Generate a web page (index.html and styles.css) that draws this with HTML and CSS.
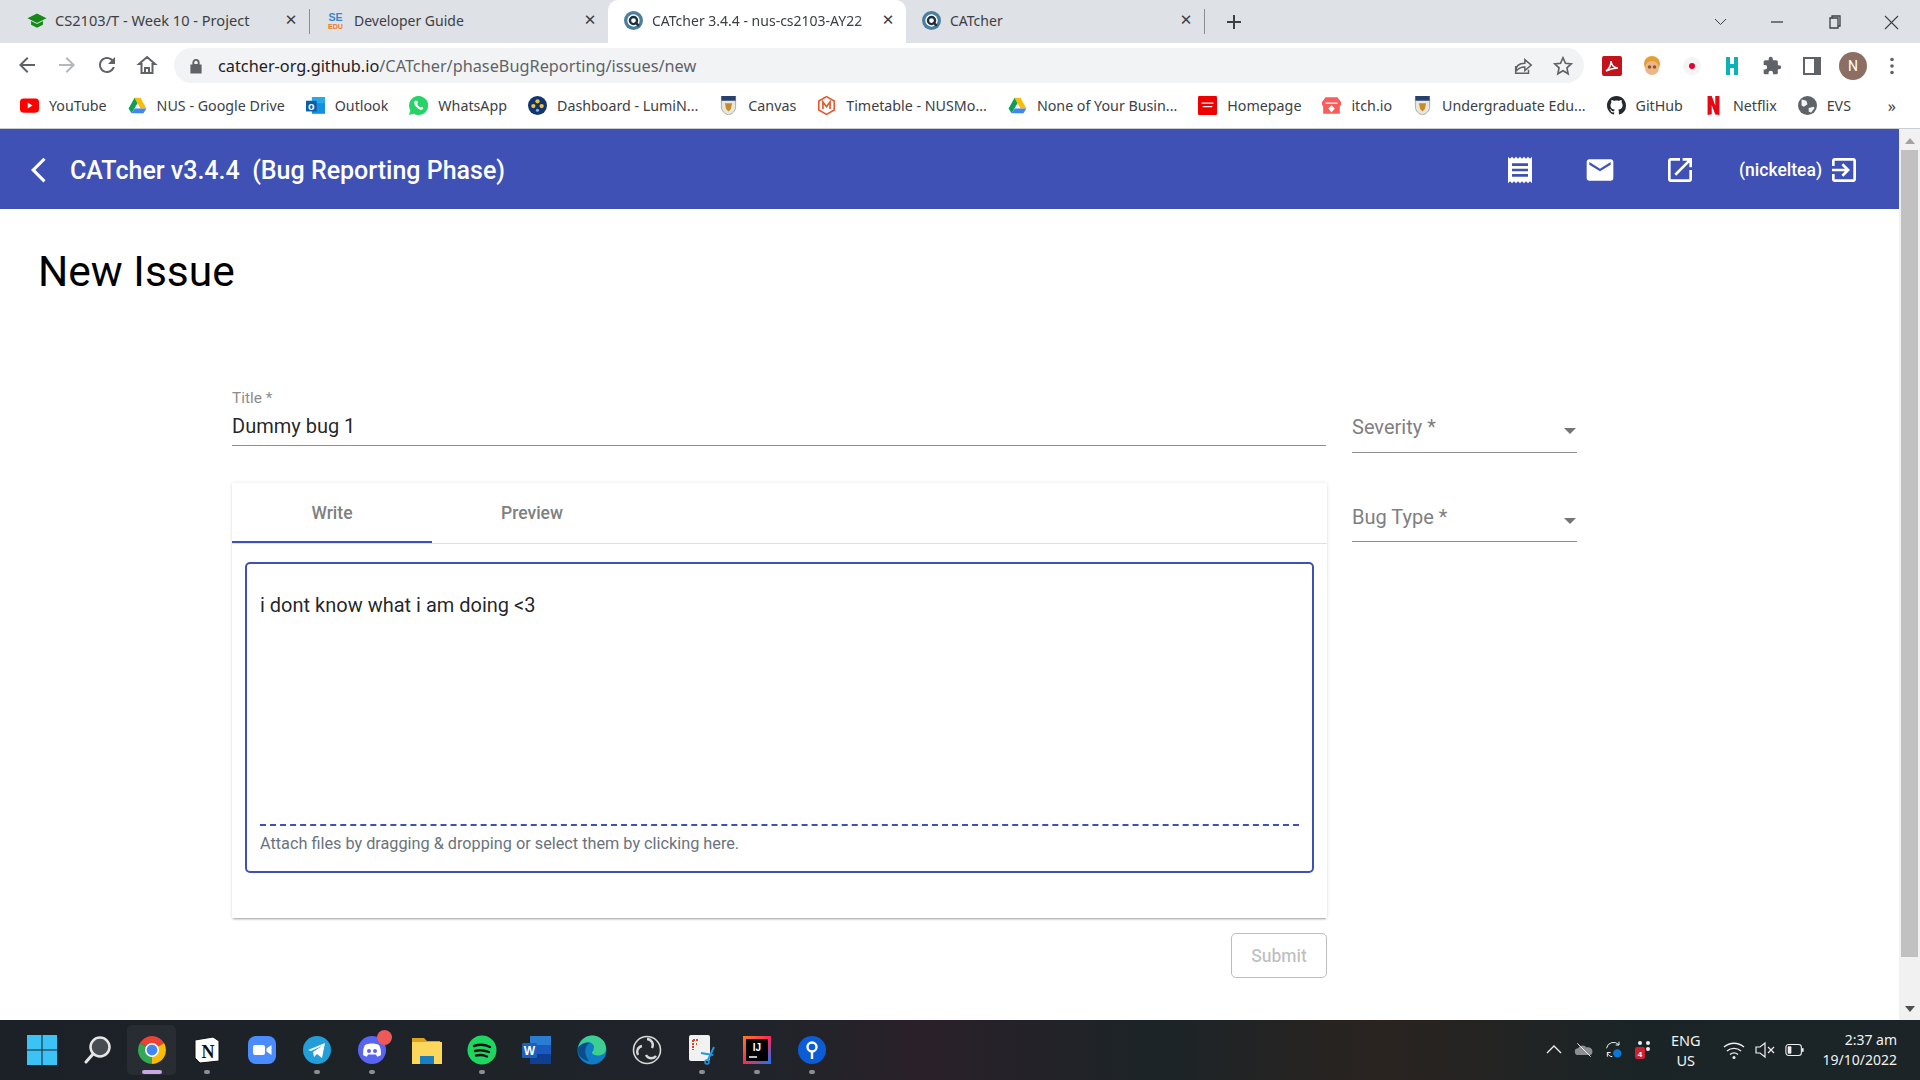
FILE: index.html
```html
<!DOCTYPE html>
<html lang="en">
<head>
  <meta charset="UTF-8">
  <title>CATcher</title>
  <link rel="stylesheet" href="styles.css">
</head>
<body>
  <svg class="defs" width="0" height="0">
    <symbol id="catcher" viewBox="0 0 16 16"><circle cx="8" cy="8" r="8" fill="#4b7f9f"/><circle cx="8" cy="8" r="5.2" fill="#fff"/><circle cx="8" cy="8" r="3" fill="none" stroke="#1e2f3d" stroke-width="2"/><path d="M9.5 9.5l3 3" stroke="#1e2f3d" stroke-width="2"/></symbol>
    <symbol id="crest" viewBox="0 0 16 16"><path d="M2 0h12v9c0 4-3 6-6 7-3-1-6-3-6-7z" fill="#e9e6da" stroke="#8a8f9a" stroke-width=".6"/><path d="M2 0h12v4H2z" fill="#28406e"/><path d="M5 6h6l-1 5-2 2-2-2z" fill="#c98a2b"/></symbol>
    <symbol id="drive" viewBox="0 0 16 16"><path d="M5.5 1.5h5l5 9h-5z" fill="#fbbc04"/><path d="M5.5 1.5L.5 10.5l2.5 4 5-8.5z" fill="#0f9d58"/><path d="M3 14.5h10l2.5-4h-10z" fill="#4285f4"/></symbol>
  </svg>

  <!-- Browser tabs -->
  <div class="tabstrip">
    <div class="tab tab-first">
      <svg class="favicon" viewBox="0 0 16 16"><path d="M8 2L0 6l8 4 8-4z" fill="#168a16"/><path d="M3 8.5v3l5 2.5 5-2.5v-3l-5 2.5z" fill="#168a16"/></svg>
      <span class="tab-title">CS2103/T - Week 10 - Project</span>
      <span class="tab-close">&#10005;</span>
    </div>
    <div class="tab-sep"></div>
    <div class="tab">
      <svg class="favicon" viewBox="0 0 16 16"><text x="8" y="8" class="fav-se">SE</text><text x="8" y="15" class="fav-edu">EDU</text></svg>
      <span class="tab-title">Developer Guide</span>
      <span class="tab-close">&#10005;</span>
    </div>
    <div class="tab tab-active">
      <svg class="favicon"><use href="#catcher"/></svg>
      <span class="tab-title tab-fade">CATcher 3.4.4 - nus-cs2103-AY22</span>
      <span class="tab-close">&#10005;</span>
    </div>
    <div class="tab">
      <svg class="favicon"><use href="#catcher"/></svg>
      <span class="tab-title">CATcher</span>
      <span class="tab-close">&#10005;</span>
    </div>
    <div class="tab-sep"></div>
    <svg class="new-tab" viewBox="0 0 16 16"><path d="M8 1v14M1 8h14" stroke="#3c4043" stroke-width="2"/></svg>
    <div class="win-controls">
      <svg class="win-btn" viewBox="0 0 57 16"><path d="M23 5l5.5 5.5L34 5" fill="none" stroke="#3c4043"/></svg>
      <svg class="win-btn" viewBox="0 0 57 16"><path d="M22 8h12" stroke="#3c4043" stroke-width="1.3"/></svg>
      <svg class="win-btn" viewBox="0 0 57 16"><path d="M24 4h8v10h-8zM26 4V2h8v10h-2" fill="none" stroke="#3c4043" stroke-width="1.3"/></svg>
      <svg class="win-btn" viewBox="0 0 57 16"><path d="M22 2l13 13M35 2L22 15" stroke="#3c4043" stroke-width="1.1"/></svg>
    </div>
  </div>

  <!-- Address bar -->
  <div class="toolbar">
    <svg class="nav-icon" viewBox="0 0 24 24"><path d="M20 11H7.83l5.59-5.59L12 4l-8 8 8 8 1.41-1.41L7.83 13H20z" fill="#5f6368"/></svg>
    <svg class="nav-icon" viewBox="0 0 24 24"><path d="M4 11h12.17l-5.59-5.59L12 4l8 8-8 8-1.41-1.41L16.17 13H4z" fill="#b4b7bb"/></svg>
    <svg class="nav-icon" viewBox="0 0 24 24"><path d="M17.65 6.35C16.2 4.9 14.21 4 12 4c-4.42 0-7.99 3.58-7.99 8s3.57 8 7.99 8c3.73 0 6.84-2.55 7.73-6h-2.08c-.82 2.33-3.04 4-5.65 4-3.31 0-6-2.69-6-6s2.69-6 6-6c1.66 0 3.14.69 4.22 1.78L13 11h7V4z" fill="#5f6368"/></svg>
    <svg class="nav-icon" viewBox="0 0 24 24"><path d="M12 4l8 7h-2.5v9h-11v-9H4zM10 20v-5h4v5" fill="none" stroke="#5f6368" stroke-width="2"/></svg>
    <div class="omnibox">
      <svg class="lock" viewBox="0 0 16 16"><path d="M3 7h10v8H3zM5 7V4.5a3 3 0 016 0V7" fill="#5f6368" stroke="#5f6368" stroke-width="1.2" fill-rule="evenodd"/><path d="M6.3 6V4.5a1.7 1.7 0 013.4 0V6z" fill="#f1f3f4"/></svg>
      <span class="url"><b>catcher-org.github.io</b>/CATcher/phaseBugReporting/issues/new</span>
      <svg class="omni-icon" viewBox="0 0 24 24"><path d="M4 12v8h14v-4M4 18c0-6 4-9 10-9V5l7 6-7 6v-4c-4 0-7 1-10 5z" fill="none" stroke="#5f6368" stroke-width="1.6"/></svg>
      <svg class="omni-icon" viewBox="0 0 24 24"><path d="M12 3l2.7 6 6.3.7-4.7 4.3 1.3 6.5L12 17.2l-5.6 3.3L7.7 14 3 9.7 9.3 9z" fill="none" stroke="#5f6368" stroke-width="1.8"/></svg>
    </div>
    <div class="ext-icons">
      <svg class="ext" viewBox="0 0 20 20"><rect width="20" height="20" rx="2" fill="#c5131c"/><path d="M4 15c3-2 5-6 5-10 0 4 3 7 7 7-4 0-8 1-12 3z" fill="none" stroke="#fff" stroke-width="1.6"/></svg>
      <svg class="ext" viewBox="0 0 20 20"><circle cx="10" cy="8" r="8" fill="#e2a032"/><circle cx="10" cy="12" r="7" fill="#efb58a"/><circle cx="7.5" cy="11" r="1.8" fill="#8a5a33"/><circle cx="12.5" cy="11" r="1.8" fill="#8a5a33"/></svg>
      <svg class="ext" viewBox="0 0 20 20"><circle cx="10" cy="10" r="9" fill="#f4f4f4"/><circle cx="10" cy="10" r="3" fill="#e4002b"/></svg>
      <svg class="ext" viewBox="0 0 20 20"><path d="M4 1h4v18H4zM12 1h4v18h-4zM8 8h4v4H8z" fill="#0ab3b8"/></svg>
      <svg class="ext" viewBox="0 0 24 24"><path d="M20.5 11H19V7c0-1.1-.9-2-2-2h-4V3.5a2.5 2.5 0 00-5 0V5H4c-1.1 0-2 .9-2 2v3.8h1.5a2.7 2.7 0 010 5.4H2V20c0 1.1.9 2 2 2h3.8v-1.5a2.7 2.7 0 015.4 0V22H17c1.1 0 2-.9 2-2v-4h1.5a2.5 2.5 0 000-5z" fill="#5f6368"/></svg>
      <svg class="ext" viewBox="0 0 20 20"><path d="M2 2h16v16H2z" fill="none" stroke="#5f6368" stroke-width="2"/><path d="M12 2h6v16h-6z" fill="#5f6368"/></svg>
      <span class="avatar">N</span>
      <svg class="ext" viewBox="0 0 20 20"><circle cx="10" cy="3.5" r="1.8" fill="#5f6368"/><circle cx="10" cy="10" r="1.8" fill="#5f6368"/><circle cx="10" cy="16.5" r="1.8" fill="#5f6368"/></svg>
    </div>
  </div>

  <!-- Bookmarks -->
  <div class="bookmarks">
    <div class="bm"><svg class="bm-icon" viewBox="0 0 16 16"><rect y="2" width="16" height="12" rx="3" fill="#f00"/><path d="M6.5 5.5v5l4-2.5z" fill="#fff"/></svg>YouTube</div>
    <div class="bm"><svg class="bm-icon"><use href="#drive"/></svg>NUS - Google Drive</div>
    <div class="bm"><svg class="bm-icon" viewBox="0 0 16 16"><rect x="5" y="1" width="11" height="14" fill="#1490df"/><rect x="5" y="1" width="11" height="5" fill="#28a8ea"/><rect y="4" width="9" height="9" fill="#0a5ea8"/><text x="4.5" y="11.5" class="fav-o">o</text></svg>Outlook</div>
    <div class="bm"><svg class="bm-icon" viewBox="0 0 16 16"><path d="M8 0a8 8 0 00-6.9 12L0 16l4.1-1.100A8 8 0 108 0z" fill="#25d366"/><path d="M5 4c-1 1-1 3 1.5 5.500S10.5 12 12 11l-.5-2-2 .5c-1-.5-2-1.500-2.500-2.500l.5-2-1-1z" fill="#fff"/></svg>WhatsApp</div>
    <div class="bm"><svg class="bm-icon" viewBox="0 0 16 16"><circle cx="8" cy="8" r="8" fill="#12356f"/><circle cx="8" cy="4.5" r="1.8" fill="#f0c33c"/><circle cx="4.5" cy="8.5" r="1.8" fill="#f0c33c"/><circle cx="11.5" cy="8.5" r="1.8" fill="#f0c33c"/><circle cx="8" cy="12" r="1.3" fill="#8fb4e8"/></svg>Dashboard - LumiN...</div>
    <div class="bm"><svg class="bm-icon"><use href="#crest"/></svg>Canvas</div>
    <div class="bm"><svg class="bm-icon" viewBox="0 0 16 16"><path d="M8 .5l6.5 3.7v7.6L8 15.5l-6.5-3.7V4.2z" fill="#fff" stroke="#e4572e" stroke-width="1.3"/><path d="M5 11V5l3 4 3-4v6" fill="none" stroke="#e4572e" stroke-width="1.4"/></svg>Timetable - NUSMo...</div>
    <div class="bm"><svg class="bm-icon"><use href="#drive"/></svg>None of Your Busin...</div>
    <div class="bm"><svg class="bm-icon" viewBox="0 0 16 16"><rect width="16" height="16" rx="1" fill="#e00"/><path d="M3 6h10M4 9h8" stroke="#fff" stroke-width="1"/></svg>Homepage</div>
    <div class="bm"><svg class="bm-icon" viewBox="0 0 16 16"><path d="M3 1h10l3 4v2a2 2 0 01-1 1.7V15H1V8.700A2 2 0 010 7V5z" fill="#fa5c5c"/><path d="M8 8.5l2 2-2 2.5-2-2.500z M3 6h10" fill="#fff" stroke="#fff"/></svg>itch.io</div>
    <div class="bm"><svg class="bm-icon"><use href="#crest"/></svg>Undergraduate Edu...</div>
    <div class="bm"><svg class="bm-icon" viewBox="0 0 16 16"><path d="M8 0C3.58 0 0 3.58 0 8c0 3.54 2.29 6.53 5.47 7.59.4.07.55-.17.55-.38 0-.19-.01-.82-.01-1.49-2.01.37-2.53-.49-2.69-.94-.09-.23-.48-.94-.82-1.13-.28-.15-.68-.52-.01-.53.63-.01 1.08.58 1.23.82.72 1.21 1.87.87 2.33.66.07-.52.28-.87.51-1.07-1.78-.2-3.64-.89-3.64-3.95 0-.87.31-1.59.82-2.15-.08-.2-.36-1.02.08-2.12 0 0 .67-.21 2.2.82.64-.18 1.32-.27 2-.27s1.36.09 2 .27c1.53-1.04 2.2-.82 2.2-.82.44 1.1.16 1.92.08 2.12.51.56.82 1.27.82 2.15 0 3.07-1.87 3.75-3.65 3.95.29.25.54.73.54 1.48 0 1.07-.01 1.93-.01 2.2 0 .21.15.46.55.38A8.01 8.01 0 0016 8c0-4.42-3.58-8-8-8z" fill="#24292e"/></svg>GitHub</div>
    <div class="bm"><svg class="bm-icon" viewBox="0 0 16 16"><path d="M3 0h3.5l3 8V0H13v16c-1.2-.2-2.3-.3-3.5-.4l-3-8V15.3L3 16z" fill="#e50914"/></svg>Netflix</div>
    <div class="bm"><svg class="bm-icon" viewBox="0 0 16 16"><circle cx="8" cy="8" r="8" fill="#5f6368"/><path d="M3 3l4 1 1 3-3 2-2-1zM9 10l4-1 1 1-3 4-2-1z" fill="#f1f3f4"/></svg>EVS</div>
    <span class="bm-more">&raquo;</span>
  </div>

  <div class="viewport">
    <div class="page">
      <!-- App header -->
      <header class="app-bar">
        <svg class="back" viewBox="0 0 12 24"><path d="M11.67 3.87L9.9 2.1 0 12l9.9 9.9 1.77-1.77L3.54 12z" fill="#fff"/></svg>
        <span class="app-title">CATcher v3.4.4  (Bug Reporting Phase)</span>
        <svg class="bar-icon" viewBox="0 0 24 24"><path d="M18 17H6v-2h12v2zm0-4H6v-2h12v2zm0-4H6V7h12v2zM3 22l1.5-1.5L6 22l1.5-1.5L9 22l1.5-1.5L12 22l1.5-1.5L15 22l1.5-1.5L18 22l1.5-1.5L21 22V2l-1.5 1.5L18 2l-1.5 1.5L15 2l-1.5 1.5L12 2l-1.5 1.5L9 2 7.5 3.5 6 2 4.5 3.5 3 2v20z"/></svg>
        <svg class="bar-icon" viewBox="0 0 24 24"><path d="M20 4H4c-1.1 0-1.99.9-1.99 2L2 18c0 1.1.9 2 2 2h16c1.1 0 2-.9 2-2V6c0-1.1-.9-2-2-2zm0 4l-8 5-8-5V6l8 5 8-5v2z"/></svg>
        <svg class="bar-icon" viewBox="0 0 24 24"><path d="M19 19H5V5h7V3H5c-1.11 0-2 .9-2 2v14c0 1.1.89 2 2 2h14c1.1 0 2-.9 2-2v-7h-2v7zM14 3v2h3.59l-9.83 9.83 1.41 1.41L19 6.41V10h2V3h-7z"/></svg>
        <span class="user">(nickeltea)</span>
        <svg class="bar-icon exit" viewBox="0 0 24 24"><path d="M10.09 15.59L11.5 17l5-5-5-5-1.41 1.41L12.67 11H3v2h9.67l-2.58 2.59zM19 3H5c-1.11 0-2 .9-2 2v4h2V5h14v14H5v-4H3v4c0 1.1.89 2 2 2h14c1.1 0 2-.9 2-2V5c0-1.1-.9-2-2-2z"/></svg>
      </header>

      <h1 class="page-title">New Issue</h1>

      <div class="issue-form">
        <div class="form-main">
          <div class="field-title">
            <label class="float-label">Title *</label>
            <div class="title-value">Dummy bug 1</div>
          </div>
          <div class="editor-card">
            <div class="tabs">
              <div class="md-tab md-tab-active">Write</div>
              <div class="md-tab">Preview</div>
            </div>
            <div class="editor-body">
              <div class="editor">
                <div class="editor-text">i dont know what i am doing &lt;3</div>
                <div class="attach">Attach files by dragging &amp; dropping or select them by clicking here.</div>
              </div>
            </div>
          </div>
          <div class="actions">
            <button class="submit" type="button" disabled>Submit</button>
          </div>
        </div>
        <div class="form-side">
          <div class="select select-first"><span>Severity *</span><i class="caret"></i></div>
          <div class="select"><span>Bug Type *</span><i class="caret"></i></div>
        </div>
      </div>
    </div>

    <div class="scrollbar">
      <i class="sb-up"></i>
      <div class="sb-thumb"></div>
      <i class="sb-down"></i>
    </div>
  </div>

  <!-- Windows taskbar -->
  <div class="taskbar">
    <div class="apps">
      <div class="app"><svg class="app-icon" viewBox="0 0 30 30"><path d="M0 0h14.5v14.5H0zM15.5 0H30v14.5H15.5zM0 15.5h14.5V30H0zM15.5 15.5H30V30H15.5z" fill="#3cc3f5"/></svg></div>
      <div class="app"><svg class="app-icon" viewBox="0 0 30 30"><circle cx="18" cy="12" r="9.5" fill="#474c52" stroke="#e6e6e6" stroke-width="2.5"/><path d="M11 19l-7 8" stroke="#e6e6e6" stroke-width="3" stroke-linecap="round"/></svg></div>
      <div class="app app-current"><svg class="app-icon" viewBox="0 0 30 30"><path d="M15 15L2.9 8A14 14 0 0127.1 8z" fill="#ea4335"/><path d="M15 15L27.1 8A14 14 0 0115 29z" fill="#fbbc04"/><path d="M15 15V29A14 14 0 012.9 8z" fill="#34a853"/><circle cx="15" cy="15" r="7" fill="#fff"/><circle cx="15" cy="15" r="5.4" fill="#4285f4"/></svg><i class="dot dot-active"></i></div>
      <div class="app"><svg class="app-icon" viewBox="0 0 30 30"><path d="M3 5l18-3 6 4v20l-19 2-5-5z" fill="#fff" stroke="#111" stroke-width="1"/><text x="16" y="23" class="notion-n">N</text></svg><i class="dot"></i></div>
      <div class="app"><svg class="app-icon" viewBox="0 0 30 30"><rect x="1" y="1" width="28" height="28" rx="8" fill="#4a8cff"/><rect x="6" y="10" width="12" height="10" rx="2" fill="#fff"/><path d="M19.5 13.5l5-3.5v10l-5-3.5z" fill="#fff"/></svg></div>
      <div class="app"><svg class="app-icon" viewBox="0 0 30 30"><circle cx="15" cy="15" r="14" fill="#229ed9"/><path d="M6 15l17-7-3 15-5-4-3 3-1-5 9-6-11 5z" fill="#fff"/></svg><i class="dot"></i></div>
      <div class="app"><svg class="app-icon" viewBox="0 0 30 30"><circle cx="15" cy="15" r="14" fill="#5865f2"/><path d="M8 10c4-2 10-2 14 0 2 3 2 7 2 10-2 1-3 1.5-4 1.5l-1-2h-8l-1 2c-1 0-2-.5-4-1.5 0-3 0-7 2-10z" fill="#fff"/><circle cx="12" cy="16" r="2" fill="#5865f2"/><circle cx="18" cy="16" r="2" fill="#5865f2"/></svg><i class="badge"></i><i class="dot"></i></div>
      <div class="app"><svg class="app-icon" viewBox="0 0 30 30"><path d="M0 3h12l3 3h13v4H0z" fill="#e0a21c"/><path d="M0 7h30v22H0z" fill="#fbd75b"/><path d="M8 21h14v8H8z" fill="#1a7fc1"/></svg></div>
      <div class="app"><svg class="app-icon" viewBox="0 0 30 30"><circle cx="15" cy="15" r="14.5" fill="#1ed760"/><path d="M7 11c6-2 11-1.5 16 1M8 16c5-1.5 9-1 14 1M9 20.5c4-1 8-.5 11 1" fill="none" stroke="#111" stroke-width="2.4" stroke-linecap="round"/></svg><i class="dot"></i></div>
      <div class="app"><svg class="app-icon" viewBox="0 0 30 30"><path d="M8 1h21v28H8z" fill="#185abd"/><path d="M8 1h21v9H8z" fill="#2b7cd3"/><path d="M8 19h21v10H8z" fill="#103f91"/><rect y="8" width="15" height="15" rx="1.5" fill="#1e5fbe"/><text x="7.5" y="20" class="word-w">W</text></svg></div>
      <div class="app"><svg class="app-icon" viewBox="0 0 30 30"><circle cx="15" cy="15" r="14.5" fill="#0f7cc4"/><path d="M1 13C3 4 10 .5 15 .5c8 0 14 6 14 13 0 5-4 7-8 7-3 0-6-1-6-3 0-1 2-2 2-5 0-4-4-6-8-5S3 10 1 13z" fill="#3ccf91"/><path d="M1 13c3-5 9-6 12-5-5 2-7 10-1 18C5 25 0 20 1 13z" fill="#0b4d8c"/></svg></div>
      <div class="app"><svg class="app-icon" viewBox="0 0 30 30"><circle cx="15" cy="15" r="13.5" fill="#23272b" stroke="#d8d8d8" stroke-width="1.6"/><path d="M15 4a6 6 0 015 9M24 21a6 6 0 01-10-1M6 20a6 6 0 014-9" fill="none" stroke="#d8d8d8" stroke-width="2.4"/></svg></div>
      <div class="app"><svg class="app-icon" viewBox="0 0 30 30"><rect x="2" width="21" height="26" rx="2" fill="#f1f1f1"/><path d="M6 5h6M6 5v10M9 9h1" stroke="#d9472b" stroke-width="2" stroke-dasharray="2 1"/><path d="M14 18l12 2M27 12l-6 13" stroke="#1f9ae0" stroke-width="2"/><circle cx="20" cy="27" r="2" fill="none" stroke="#1f9ae0" stroke-width="1.5"/></svg><i class="dot"></i></div>
      <div class="app"><svg class="app-icon" viewBox="0 0 30 30"><defs><linearGradient id="ij" x1="0" y1="0" x2="1" y2="1"><stop offset="0" stop-color="#fc801d"/><stop offset=".5" stop-color="#fe2857"/><stop offset="1" stop-color="#087cfa"/></linearGradient></defs><rect x="1" y="1" width="28" height="28" fill="url(#ij)"/><rect x="4" y="4" width="22" height="22" fill="#000"/><text x="15" y="16" class="ij-text">IJ</text><path d="M7 22h8" stroke="#fff" stroke-width="1.5"/></svg><i class="dot"></i></div>
      <div class="app"><svg class="app-icon" viewBox="0 0 30 30"><circle cx="15" cy="15" r="14" fill="#0b5cd5"/><circle cx="15" cy="12" r="4.5" fill="none" stroke="#fff" stroke-width="2.4"/><path d="M15 16v8" stroke="#fff" stroke-width="2.4"/></svg><i class="dot"></i></div>
    </div>
    <div class="tray">
      <svg class="tray-icon" viewBox="0 0 20 20"><path d="M3 13l7-7 7 7" fill="none" stroke="#eee" stroke-width="1.3"/></svg>
      <svg class="tray-icon" viewBox="0 0 24 20"><path d="M5 16a4 4 0 010-8c1-4 8-5 10-1 4-1 8 2 7 6 0 2-1 3-3 3z" fill="#8c8f92"/><path d="M4 2l16 16" stroke="#eee" stroke-width="1.2"/></svg>
      <svg class="tray-icon" viewBox="0 0 24 22"><path d="M3 9a8.5 8.5 0 0115-4M18 1v4h-4M4 14c1 3 3 5 6 5M4 19v-5h4" fill="none" stroke="#eee" stroke-width="1.2"/><circle cx="16" cy="15" r="5" fill="#0a78d7"/></svg>
      <svg class="tray-icon" viewBox="0 0 20 20"><circle cx="6" cy="3" r="2" fill="#eee"/><circle cx="14" cy="3" r="2" fill="#eee"/><circle cx="14" cy="9" r="2" fill="#eee"/><rect x="1" y="7" width="10" height="12" rx="2" fill="#d01f2e"/><text x="6" y="16.5" class="tray-4">4</text></svg>
      <div class="lang">ENG<br>US</div>
      <svg class="tray-icon tray-wifi" viewBox="0 0 22 20"><path d="M1 7c6-5 14-5 20 0M4 11c4-3.5 10-3.5 14 0M7 14.5c2.5-2 5.5-2 8 0" fill="none" stroke="#eee" stroke-width="1.4"/><circle cx="11" cy="17.5" r="1.5" fill="#eee"/></svg>
      <svg class="tray-icon" viewBox="0 0 20 20"><path d="M1 7h4l5-4v14l-5-4H1zM13 7l6 6M19 7l-6 6" fill="none" stroke="#eee" stroke-width="1.2"/></svg>
      <svg class="tray-icon" viewBox="0 0 22 20"><rect x="1" y="4" width="17" height="12" rx="3" fill="none" stroke="#eee" stroke-width="1.2"/><rect x="3" y="6" width="4" height="8" rx="1" fill="#eee"/><path d="M19.5 8v4" stroke="#eee" stroke-width="2"/></svg>
      <div class="clock">2:37 am<br>19/10/2022</div>
    </div>
  </div>
</body>
</html>
```

FILE: styles.css
```css
/* Page frame */
html, body {
  margin: 0;
  height: 100%;
}
body {
  width: 1920px;
  height: 1080px;
  display: flex;
  flex-direction: column;
  overflow: hidden;
  background-color: white;
  font-family: Roboto, sans-serif;
}
.defs {
  display: block;
  height: 0;
}

/* Tab strip */
.tabstrip {
  height: 43px;
  flex: none;
  display: flex;
  align-items: center;
  padding-left: 12px;
  background-color: #dee1e6;
  font-family: "Noto Sans", sans-serif;
  font-size: 14px;
  color: #3c4043;
}
.tab {
  width: 298px;
  height: 43px;
  box-sizing: border-box;
  padding: 0 10px 3px 16px;
  display: flex;
  align-items: center;
  flex: none;
}
.tab-first {
  width: 297px;
}
.tab-active {
  background-color: white;
  border-radius: 10px 10px 0 0;
  color: #3c4043;
}
.favicon {
  width: 19px;
  height: 19px;
  flex: none;
  margin-right: 9px;
}
.tab-first .favicon {
  width: 22px;
  margin-left: -2px;
  margin-right: 7px;
}
.tab-first .tab-title {
  font-size: 14.6px;
}
.tab-title {
  flex: 1;
  white-space: nowrap;
  overflow: hidden;
}
.tab-fade {
  -webkit-mask-image: linear-gradient(90deg, black 90%, transparent);
  mask-image: linear-gradient(90deg, black 90%, transparent);
}
.tab-close {
  width: 16px;
  flex: none;
  text-align: center;
  font-size: 15px;
  font-weight: 700;
  font-family: "DejaVu Sans", sans-serif;
}
.tab-sep {
  width: 1px;
  height: 25px;
  flex: none;
  background-color: #8b8e93;
}
.fav-se {
  font: 700 9px "Liberation Sans", sans-serif;
  text-anchor: middle;
  fill: #3a87c8;
}
.fav-edu {
  font: 700 6px "Liberation Sans", sans-serif;
  text-anchor: middle;
  fill: #ee7a22;
}
.new-tab {
  width: 16px;
  height: 16px;
  margin-left: 21px;
}
.win-controls {
  margin-left: auto;
  display: flex;
}
.win-btn {
  width: 57px;
  height: 16px;
}

/* Toolbar */
.toolbar {
  height: 43px;
  flex: none;
  display: flex;
  align-items: center;
  padding-left: 15px;
  box-sizing: border-box;
  background-color: white;
}
.nav-icon {
  width: 24px;
  height: 24px;
  margin-right: 16px;
  flex: none;
}
.omnibox {
  width: 1410px;
  height: 35px;
  box-sizing: border-box;
  margin-left: -1px;
  margin-top: 2px;
  padding: 0 10px 0 14px;
  display: flex;
  align-items: center;
  flex: none;
  border-radius: 18px;
  background-color: #f1f3f4;
  font-family: "Noto Sans", sans-serif;
  font-size: 16.3px;
  color: #5f6368;
}
.lock {
  width: 16px;
  height: 16px;
  margin-right: 14px;
}
.url {
  flex: 1;
}
.url b {
  font-weight: 400;
  color: #202124;
}
.omni-icon {
  width: 22px;
  height: 22px;
  margin-left: 18px;
}
.ext-icons {
  display: flex;
  align-items: center;
  margin-left: 18px;
  margin-top: 2px;
}
.ext {
  width: 20px;
  height: 20px;
  margin-right: 20px;
  flex: none;
}
.avatar {
  width: 28px;
  height: 28px;
  margin: 0 15px 0 -3px;
  flex: none;
  border-radius: 50%;
  background-color: #8d6e63;
  color: white;
  font-size: 14px;
  line-height: 28px;
  text-align: center;
}

/* Bookmarks */
.bookmarks {
  height: 43px;
  flex: none;
  box-sizing: border-box;
  padding: 0 0 3px 20px;
  border-bottom: 1px solid #c9ccd1;
  display: flex;
  align-items: center;
  font-family: "Noto Sans", sans-serif;
  font-size: 14.25px;
  color: #3c4043;
  white-space: nowrap;
}
.bm {
  display: flex;
  align-items: center;
  margin-right: 21px;
  flex: none;
}
.bm-icon {
  width: 19px;
  height: 19px;
  margin-right: 10px;
  flex: none;
}
.bm-more {
  margin-left: auto;
  margin-right: 24px;
  font-size: 16px;
}
.fav-o {
  font: 700 9px "Liberation Sans", sans-serif;
  text-anchor: middle;
  fill: white;
}

/* App area */
.viewport {
  flex: 1;
  min-height: 0;
  display: flex;
}
.page {
  flex: 1;
  min-width: 0;
}
.app-bar {
  height: 80px;
  box-sizing: border-box;
  padding: 2px 0 0 31px;
  display: flex;
  align-items: center;
  background-color: #3f51b5;
  color: white;
}
.back {
  width: 15px;
  height: 30px;
  flex: none;
}
.app-title {
  margin-left: 24px;
  font-size: 25px;
  font-weight: 500;
  white-space: pre;
  flex: 1;
}
.bar-icon {
  width: 32px;
  height: 32px;
  margin-right: 48px;
  fill: white;
  flex: none;
}
.user {
  margin-left: -5px;
  font-size: 17.5px;
  font-weight: 500;
}
.bar-icon.exit {
  margin-left: 6px;
  margin-right: 39px;
}
.page-title {
  margin: 36px 0 0 38px;
  font-size: 42.5px;
  font-weight: 400;
  line-height: 54px;
  color: black;
}

/* Issue form */
.issue-form {
  margin: 91px 0 0 232px;
  display: flex;
}
.form-main {
  width: 1095px;
  flex: none;
}
.form-side {
  width: 225px;
  margin-left: 25px;
  flex: none;
}
.field-title {
  height: 55px;
  width: 1094px;
  border-bottom: 1px solid #8f8f8f;
}
.float-label {
  display: block;
  font-size: 15.4px;
  line-height: 16px;
  color: #8c8c8c;
}
.title-value {
  margin-top: 8px;
  font-size: 20px;
  line-height: 24px;
  color: rgba(0, 0, 0, 0.87);
}
.editor-card {
  margin-top: 37px;
  height: 435px;
  background-color: white;
  box-shadow: 0 2px 2px -1px rgba(0, 0, 0, 0.35), 0 0 4px rgba(0, 0, 0, 0.1);
}
.tabs {
  height: 61px;
  box-sizing: border-box;
  display: flex;
  border-bottom: 1px solid #e0e0e0;
}
.md-tab {
  width: 200px;
  height: 60px;
  box-sizing: border-box;
  line-height: 60px;
  text-align: center;
  font-size: 17.5px;
  font-weight: 500;
  color: #808080;
}
.md-tab-active {
  border-bottom: 2px solid #3f51b5;
}
.editor-body {
  padding: 18px 13px 0;
}
.editor {
  height: 311px;
  box-sizing: border-box;
  padding: 28px 13px 0;
  border: 2px solid #3f51b5;
  border-radius: 5px;
}
.editor-text {
  height: 232px;
  line-height: 26px;
  font-size: 20px;
  color: rgba(0, 0, 0, 0.87);
  border-bottom: 2px dashed #3f51b5;
}
.attach {
  margin-top: 8px;
  font-size: 16.25px;
  line-height: 20px;
  color: #6a737d;
}
.actions {
  margin-top: 15px;
  display: flex;
  justify-content: flex-end;
}
.submit {
  width: 96px;
  height: 45px;
  padding: 0;
  font-family: Roboto, sans-serif;
  font-size: 17.5px;
  font-weight: 500;
  color: rgba(0, 0, 0, 0.26);
  background-color: white;
  border: 1px solid #bdbdbd;
  border-radius: 5px;
}
.select {
  height: 67px;
  margin-top: 22px;
  box-sizing: border-box;
  padding-top: 30px;
  display: flex;
  align-items: flex-start;
  justify-content: space-between;
  border-bottom: 1px solid #8f8f8f;
  font-size: 20px;
  line-height: 24px;
  color: #7f7f7f;
}
.select-first {
  margin-top: 1px;
  height: 62px;
  padding-top: 24px;
}
.caret {
  width: 0;
  height: 0;
  margin: 13px 1px 0 0;
  border-left: 6px solid transparent;
  border-right: 6px solid transparent;
  border-top: 6px solid #757575;
}

/* Scrollbar */
.scrollbar {
  width: 21px;
  flex: none;
  box-sizing: border-box;
  padding: 9px 2px 0;
  display: flex;
  flex-direction: column;
  align-items: center;
  background-color: #f1f1f1;
}
.sb-up {
  width: 0;
  height: 0;
  border-left: 5px solid transparent;
  border-right: 5px solid transparent;
  border-bottom: 6px solid #a3a3a3;
}
.sb-thumb {
  width: 17px;
  height: 807px;
  margin-top: 6px;
  background-color: #c1c1c1;
}
.sb-down {
  width: 0;
  height: 0;
  margin-top: 49px;
  border-left: 5px solid transparent;
  border-right: 5px solid transparent;
  border-top: 6px solid #505050;
}

/* Taskbar */
.taskbar {
  height: 60px;
  flex: none;
  display: flex;
  align-items: flex-start;
  background: linear-gradient(90deg, #1b2126, #20242a 40%, #2a2029 48%, #1c2427 60%, #2a2320 72%, #1a2426 85%, #1c2428);
  color: #f2f2f2;
}
.apps {
  display: flex;
  padding: 5px 0 0 14px;
}
.app {
  position: relative;
  width: 55px;
  height: 50px;
  box-sizing: border-box;
  padding-top: 10px;
  display: flex;
  flex-direction: column;
  align-items: center;
}
.app-current::before {
  content: "";
  position: absolute;
  left: 3px;
  right: 3px;
  top: 0;
  bottom: 0;
  border-radius: 5px;
  background-color: rgba(255, 255, 255, 0.05);
}
.app-icon {
  position: relative;
  width: 30px;
  height: 30px;
  flex: none;
}
.dot {
  width: 6px;
  height: 4px;
  margin-top: 5px;
  flex: none;
  border-radius: 2px;
  background-color: #8b8f93;
}
.dot-active {
  position: relative;
  width: 20px;
  background-color: #c9a6e4;
}
.badge {
  position: absolute;
  left: 33px;
  top: 5px;
  width: 15px;
  height: 15px;
  border-radius: 50%;
  background-color: #ee5a5a;
}
.notion-n {
  font: 700 18px "Liberation Serif", serif;
  text-anchor: middle;
  fill: #111;
}
.word-w {
  font: 700 12px "Liberation Sans", sans-serif;
  text-anchor: middle;
  fill: white;
}
.ij-text {
  font: 700 10px "Liberation Sans", sans-serif;
  text-anchor: middle;
  fill: white;
}
.tray-4 {
  font: 700 8px "Liberation Sans", sans-serif;
  text-anchor: middle;
  fill: white;
}
.tray {
  margin-left: auto;
  height: 60px;
  padding-right: 23px;
  display: flex;
  align-items: center;
  font-family: "Noto Sans", sans-serif;
  font-size: 14.5px;
  line-height: 20px;
}
.tray-icon {
  width: 20px;
  height: 20px;
  margin-right: 10px;
  flex: none;
}
.lang {
  margin: 0 22px 0 7px;
  text-align: center;
}
.tray-wifi {
  width: 22px;
}
.clock {
  margin-left: 8px;
  text-align: right;
  font-size: 14px;
}
```
